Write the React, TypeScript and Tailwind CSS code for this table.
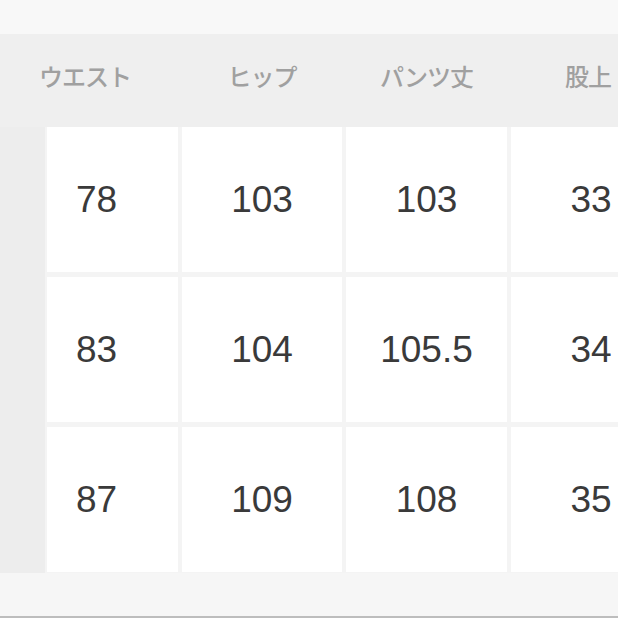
const headers = ['ウエスト', 'ヒップ', 'パンツ丈', '股上'];
const rows = [
  ['78', '103', '103', '33'],
  ['83', '104', '105.5', '34'],
  ['87', '109', '108', '35'],
];

export default function App() {
  return (
    <div
      className="flex h-[618px] w-[618px] flex-col overflow-hidden bg-[#f7f7f7]"
      style={{ fontFamily: '"Liberation Sans", "Noto Sans CJK JP", sans-serif' }}
    >
      <div className="h-[34px] shrink-0 bg-[#f8f8f8]" />
      <div className="flex h-[539px] shrink-0 flex-col bg-[#efefef]">
        <div className="flex h-[93px] shrink-0 items-center pb-[6px] text-[24px] font-medium tracking-[-1px] text-[#a0a0a0]">
          <div className="w-[170px] shrink-0 text-center">{headers[0]}</div>
          <div className="ml-[12px] w-[160px] shrink-0 text-center">{headers[1]}</div>
          <div className="ml-[4px] w-[161px] shrink-0 text-center">{headers[2]}</div>
          <div className="ml-[4px] w-[160px] shrink-0 pr-[6px] text-center">{headers[3]}</div>
        </div>
        <div className="flex flex-1">
          <div className="w-[45px] shrink-0 bg-[#ededed]" />
          <div className="grid flex-1 grid-cols-[131px_160px_161px_160px] grid-rows-[145px_145px_145px] gap-x-[4px] gap-y-[5px] bg-[#f4f4f4] pl-[2px]">
            {rows.map((row, r) =>
              row.map((v, c) => (
                <div
                  key={`${r}-${c}`}
                  className={`flex items-center bg-white text-[37px] text-[#3a3a3a] ${c === 0 ? 'justify-start pl-[29px]' : 'justify-center'}`}
                >
                  {v}
                </div>
              ))
            )}
          </div>
        </div>
      </div>
      <div className="flex-1 bg-[#f6f6f6]" />
      <div className="h-[2px] shrink-0 bg-[#bdbdbd]" />
    </div>
  );
}
